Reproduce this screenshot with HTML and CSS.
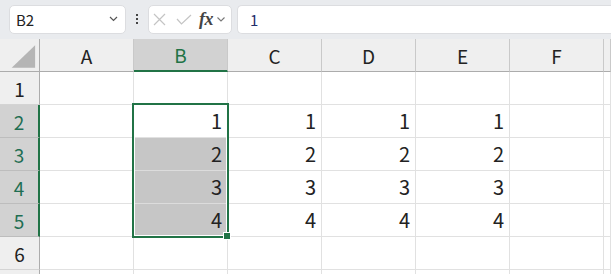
FILE: index.html
```html
<!DOCTYPE html>
<html lang="ja">
<head>
  <meta charset="UTF-8" />
  <meta name="viewport" content="width=device-width, initial-scale=1.0" />
  <title>Sheet</title>
  <link rel="stylesheet" href="styles.css">
</head>
<body>
  <div class="toolbar">
    <div class="namebox">
      <span>B2</span>
      <svg class="chev" width="9" height="6" viewBox="0 0 9 6"><path d="M1 1 L4.5 4.5 L8 1" fill="none" stroke="#555" stroke-width="1.2"/></svg>
    </div>
    <div class="dots"><i></i><i></i><i></i></div>
    <div class="fxbox">
      <svg class="ic-x" width="13" height="13" viewBox="0 0 13 13"><path d="M1 1 L12 12 M12 1 L1 12" stroke="#c4c4c4" stroke-width="1.2" fill="none"/></svg>
      <svg class="ic-ok" width="16" height="11" viewBox="0 0 16 11"><path d="M1 5 L5.5 10 L15 1" stroke="#c4c4c4" stroke-width="1.2" fill="none"/></svg>
      <span class="fx">fx</span>
      <svg class="ic-chev" width="8" height="5" viewBox="0 0 8 5"><path d="M0.5 0.5 L4 4 L7.5 0.5" fill="none" stroke="#777" stroke-width="1.1"/></svg>
    </div>
    <div class="formula">1</div>
  </div>

  <div class="sheet">
    <div class="grid">
      <div class="hd corner">
        <svg width="40" height="33" viewBox="0 0 40 33"><polygon points="12,29 36,6 36,29" fill="#b5b5b5"/></svg>
      </div>
      <div class="hd">A</div>
      <div class="hd col-sel">B</div>
      <div class="hd">C</div>
      <div class="hd">D</div>
      <div class="hd">E</div>
      <div class="hd">F</div>
      <div class="hd"></div>

      <div class="rh">1</div>
      <div class="c"></div><div class="c"></div><div class="c"></div><div class="c"></div><div class="c"></div><div class="c"></div><div class="c"></div>

      <div class="rh row-sel">2</div>
      <div class="c"></div><div class="c">1</div><div class="c">1</div><div class="c">1</div><div class="c">1</div><div class="c"></div><div class="c"></div>

      <div class="rh row-sel">3</div>
      <div class="c"></div><div class="c sel">2</div><div class="c">2</div><div class="c">2</div><div class="c">2</div><div class="c"></div><div class="c"></div>

      <div class="rh row-sel">4</div>
      <div class="c"></div><div class="c sel">3</div><div class="c">3</div><div class="c">3</div><div class="c">3</div><div class="c"></div><div class="c"></div>

      <div class="rh row-sel">5</div>
      <div class="c"></div><div class="c sel">4</div><div class="c">4</div><div class="c">4</div><div class="c">4</div><div class="c"></div><div class="c"></div>

      <div class="rh">6</div>
      <div class="c"></div><div class="c"></div><div class="c"></div><div class="c"></div><div class="c"></div><div class="c"></div><div class="c"></div>

      <div class="rh"></div>
      <div class="c"></div><div class="c"></div><div class="c"></div><div class="c"></div><div class="c"></div><div class="c"></div><div class="c"></div>
    </div>
    <div class="selection"></div>
    <div class="handle"></div>
  </div>
</body>
</html>
```

FILE: styles.css
```css
:root {
  --bar: #e9ebee;
  --head: #efefef;
  --head-sel: #d2d2d2;
  --green: #217346;
  --grid: #e1e1e1;
  --head-line: #acacac;
  --text: #222222;
}

* {
  box-sizing: border-box;
}

body {
  margin: 0;
  width: 611px;
  height: 274px;
  overflow: hidden;
  background: #fff;
  color: var(--text);
  font-family: "Noto Sans CJK JP", "Noto Sans", sans-serif;
}

/* formula bar */
.toolbar {
  height: 39px;
  background: var(--bar);
  display: flex;
  align-items: center;
  padding: 0 0 1px 9px;
}

.namebox {
  width: 117px;
  height: 29px;
  background: #fff;
  border: 1px solid #dcdde0;
  border-radius: 5px;
  display: flex;
  align-items: center;
  justify-content: space-between;
  padding: 0 7px 0 6px;
  font-size: 15px;
}

.dots {
  width: 22px;
  display: flex;
  flex-direction: column;
  align-items: center;
  gap: 2px;
}

.dots i {
  width: 2px;
  height: 2px;
  background: #444;
}

.fxbox {
  width: 84px;
  height: 29px;
  background: #fff;
  border: 1px solid #dcdde0;
  border-radius: 5px;
  display: flex;
  align-items: center;
  padding-left: 4px;
}

.ic-ok {
  margin-left: 10px;
}

.fx {
  font-family: "Liberation Serif", serif;
  font-style: italic;
  font-weight: bold;
  font-size: 18px;
  color: #444;
  margin-left: 7px;
  letter-spacing: -0.5px;
  line-height: 1;
}

.ic-chev {
  margin-left: 4px;
}

.formula {
  flex: 1;
  height: 29px;
  margin-left: 5px;
  background: #fff;
  border: 1px solid #dcdde0;
  border-right: none;
  border-radius: 5px 0 0 5px;
  display: flex;
  align-items: center;
  padding-left: 12px;
  font-size: 15px;
  color: #1f2f6b;
}

/* sheet */
.sheet {
  position: relative;
  height: 235px;
  overflow: hidden;
}

.grid {
  display: grid;
  grid-template-columns: 40px repeat(6, 94px) 1fr;
  grid-auto-rows: 33px;
}

.hd,
.rh,
.c {
  border-right: 1px solid var(--grid);
  border-bottom: 1px solid var(--grid);
  display: flex;
  align-items: center;
  line-height: 1;
}

.hd {
  background: var(--head);
  border-right-color: #c9c9c9;
  border-bottom-color: var(--head-line);
  justify-content: center;
  font-size: 19px;
}

.corner {
  border-right-color: var(--head-line);
}

.col-sel {
  background: var(--head-sel);
  border-bottom: 2px solid var(--green);
  color: var(--green);
}

.rh {
  background: var(--head);
  border-right-color: var(--head-line);
  border-bottom-color: #d4d4d4;
  justify-content: center;
  font-size: 19px;
}

.row-sel {
  background: var(--head-sel);
  border-right: 2px solid var(--green);
  border-bottom-color: #bdbdbd;
  color: #1f6e52;
}

.c {
  justify-content: flex-end;
  padding-right: 5px;
  font-size: 20px;
}

.c.sel {
  background: #c6c6c6;
  border-bottom-color: #dcdcdc;
}

.selection {
  position: absolute;
  left: 132px;
  top: 64px;
  width: 97px;
  height: 135px;
  border: 2px solid var(--green);
  box-shadow: inset 0 0 0 1px #fff;
}

.handle {
  position: absolute;
  left: 223px;
  top: 193px;
  width: 8px;
  height: 8px;
  background: var(--green);
  border: 1px solid #fff;
}
```
